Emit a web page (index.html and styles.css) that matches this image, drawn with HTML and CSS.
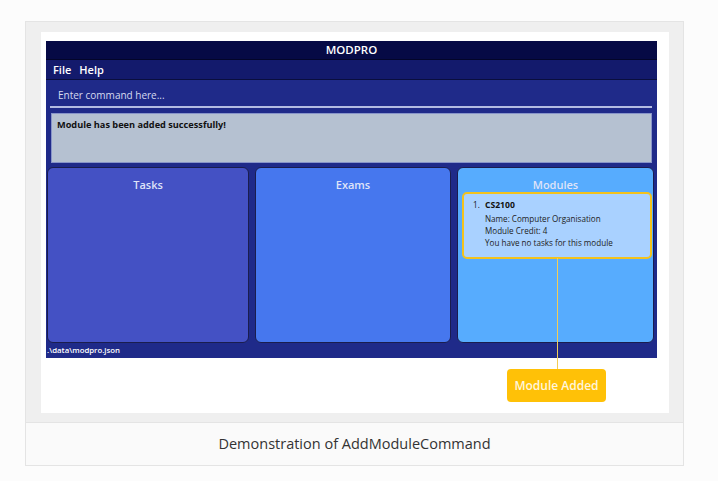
FILE: index.html
```html
<!DOCTYPE html>
<html>
<head>
<meta charset="utf-8">
<link rel="stylesheet" href="styles.css">
</head>
<body>
<div class="figure">
  <div class="frame">
    <div class="canvas">
      <div class="app">
        <div class="titlebar">MODPRO</div>
        <div class="menubar"><span>File</span><span>Help</span></div>
        <div class="command">
          <div class="cmd-text">Enter command here...</div>
          <div class="cmd-line"></div>
        </div>
        <div class="result">Module has been added successfully!</div>
        <div class="panels">
          <div class="panel tasks"><div class="panel-title">Tasks</div></div>
          <div class="panel exams"><div class="panel-title">Exams</div></div>
          <div class="panel modules">
            <div class="panel-title">Modules</div>
            <div class="card">
              <div class="card-row"><span class="num">1.</span><span class="code">CS2100</span></div>
              <div class="card-line">Name: Computer Organisation</div>
              <div class="card-line">Module Credit: 4</div>
              <div class="card-line">You have no tasks for this module</div>
            </div>
          </div>
        </div>
        <div class="status">.\data\modpro.json</div>
      </div>
      <div class="pointer"></div>
      <div class="badge">Module Added</div>
    </div>
  </div>
  <div class="caption">Demonstration of AddModuleCommand</div>
</div>
</body>
</html>
```
FILE: styles.css
```css
* { box-sizing: border-box; }
html, body { margin: 0; padding: 0; }
body {
  background: #fcfcfc;
  font-family: "Open Sans", "Noto Sans", sans-serif;
  width: 718px;
  height: 481px;
  overflow: hidden;
}
.figure {
  margin: 21px 0 0 25px;
  width: 659px;
  border: 1px solid #e4e4e4;
  background: #fafafa;
}
.frame {
  background: #efefef;
  padding: 10px 14px 9px 15px;
}
.canvas {
  position: relative;
  background: #ffffff;
  height: 381px;
  padding: 9px 12px 0 5px;
}
.app {
  width: 611px;
  height: 317px;
  background: #1f2a89;
  display: flex;
  flex-direction: column;
  color: #fff;
}
.titlebar {
  height: 19px;
  background: #060a45;
  border-bottom: 1px solid #03052a;
  text-align: center;
  font-size: 11.5px;
  font-weight: 600;
  line-height: 18px;
}
.menubar {
  height: 20px;
  background: #131a6c;
  border-bottom: 1px solid #0a0e3e;
  display: flex;
  gap: 8px;
  padding-left: 7px;
  font-size: 11px;
  font-weight: 600;
  line-height: 19px;
}
.command {
  height: 33px;
  padding: 7px 5px 0 4px;
}
.cmd-text {
  font-size: 10px;
  color: #d6daf0;
  padding-left: 8px;
  line-height: 17px;
}
.cmd-line {
  height: 2px;
  background: #b3bbe2;
  margin-top: 2px;
}
.result {
  margin: 0 5px 0 5px;
  height: 50px;
  background: #b5c1d1;
  border: 1px solid #8794c9;
  color: #111;
  font-size: 9.2px;
  font-weight: 700;
  padding: 4px 0 0 5px;
}
.panels {
  display: grid;
  grid-template-columns: 202px 196px 197px;
  gap: 6px;
  padding: 4px 0 0 1px;
  height: 180px;
}
.panel {
  border: 1.5px solid #1a1d4e;
  border-radius: 6px;
  height: 176px;
}
.tasks { background: #4451c4; }
.exams { background: #4677ee; }
.modules { background: #57acfe; }
.panel-title {
  text-align: center;
  font-size: 11px;
  font-weight: 600;
  color: #dfe3f8;
  margin-top: 10px;
  line-height: 14px;
}
.card {
  margin: 0 1px 0 4px;
  height: 67px;
  background: #a9d1ff;
  border: 2px solid #f3c21c;
  border-radius: 5px;
  padding: 5px 0 0 9px;
  color: #111;
  font-size: 8.1px;
  line-height: 12px;
}
.card-row { display: flex; margin-bottom: 2px; }
.num { width: 12px; }
.code { font-weight: 700; font-size: 8.6px; }
.card-line { padding-left: 12px; color: #222; }
.status {
  font-size: 7.8px;
  font-weight: 600;
  padding: 0 0 0 1px;
  line-height: 15px;
}
.pointer {
  position: absolute;
  left: 516px;
  top: 226px;
  width: 1px;
  height: 111px;
  background: #f4cd55;
}
.badge {
  position: absolute;
  left: 466px;
  top: 337px;
  width: 99px;
  height: 33px;
  background: #ffc107;
  border-radius: 4px;
  color: #fff6dc;
  font-size: 12px;
  font-weight: 600;
  text-align: center;
  line-height: 33px;
}
.caption {
  height: 43px;
  border-top: 1px solid #e4e4e4;
  background: #fafafa;
  text-align: center;
  font-size: 14.5px;
  color: #333;
  line-height: 42px;
}
```
